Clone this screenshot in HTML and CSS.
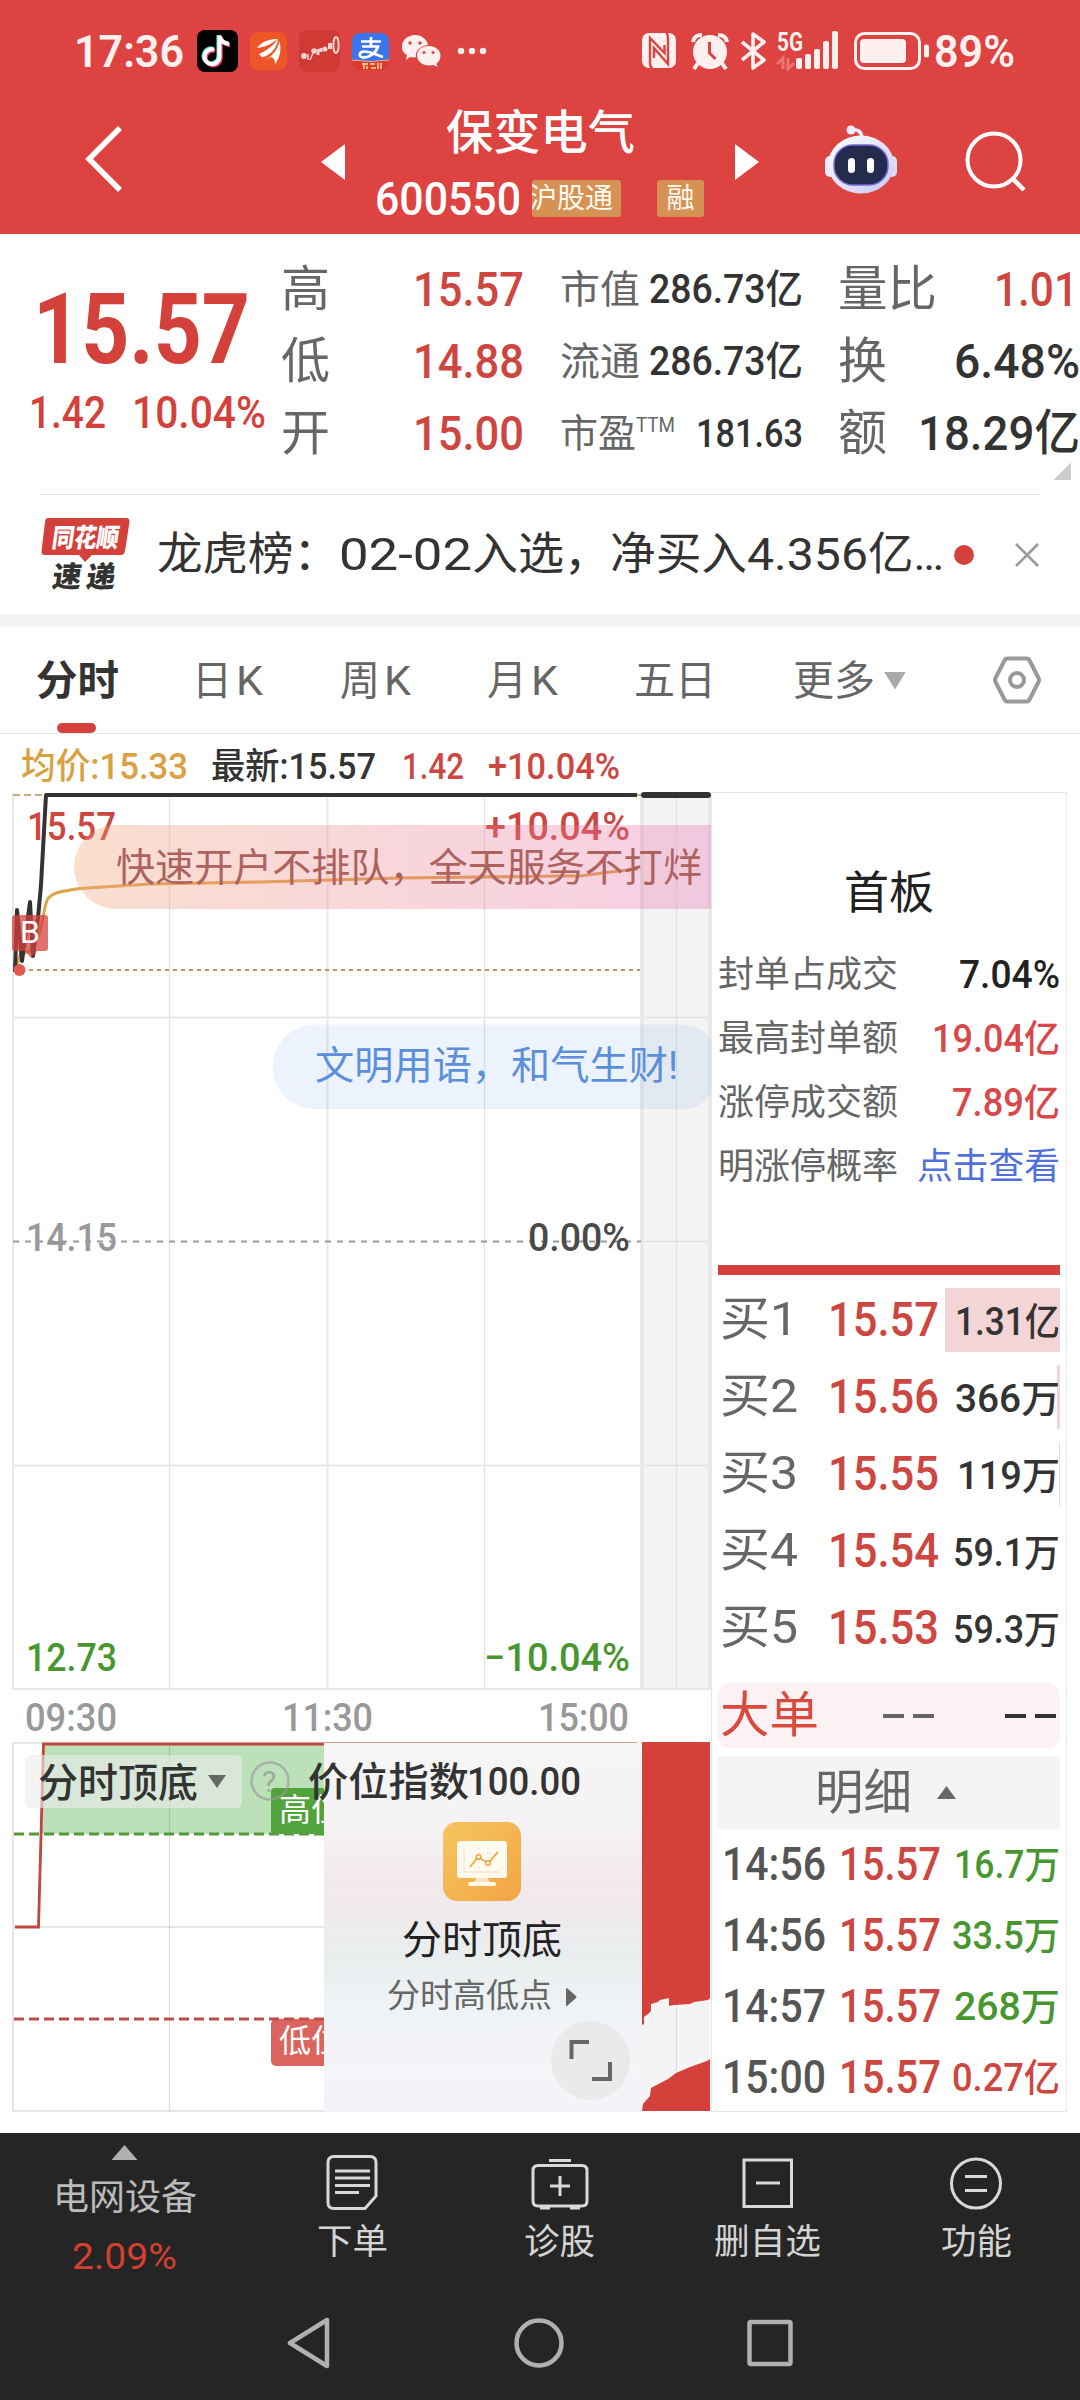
FILE: index.html
```html
<!DOCTYPE html>
<html lang="zh-CN">
<head>
<meta charset="utf-8">
<title>保变电气 600550</title>
<link rel="stylesheet" href="styles.css">
</head>
<body>
<header class="top">
  <div class="status">
    <div class="status-left">
      <span class="clock" data-w="110">17:36</span>
      <svg class="app-tiktok" width="41" height="42" viewBox="0 0 41 42"><rect width="41" height="42" rx="8"/><g fill="none" stroke-width="4"><path stroke="#5ff0ea" d="M17 19.500a7.500 7.500 0 1 0 5.500 8V6c1 5 5 7.500 9.500 8" transform="translate(-1 -.8)"/><path stroke="#f0436a" d="M17 19.500a7.500 7.500 0 1 0 5.500 8V6c1 5 5 7.500 9.500 8" transform="translate(1.200 1.200)"/><path stroke="#fff" d="M17 19.500a7.500 7.500 0 1 0 5.500 8V6c1 5 5 7.500 9.500 8"/></g></svg>
      <svg class="app-orange" width="37" height="38" viewBox="0 0 37 38"><rect width="37" height="38" rx="8" fill="#ee5527"/><g fill="#fff"><path d="M7 16C12 9 20 7 28 7C22 11 17 15 7 16z"/><path d="M9 22C16 19 23 14 28 7C27 17 20 23 12 25.500z"/><path d="M15 28C23 24 28 17 29.500 9C32 19 29 27 25 32C25 28 24 26 21 25z"/></g></svg>
      <svg class="app-stock" width="41" height="42" viewBox="0 0 41 42"><rect width="41" height="42" rx="8" fill="#d03a35"/><g fill="#fff" fill-opacity=".8" stroke="#f5cfca" stroke-width="1.500"><circle cx="5" cy="26" r="2.200"/><path d="M9 24v6M11 30l3-7" fill="none"/><circle cx="15" cy="21" r="2"/><path d="M19 19v6M22 18v4" fill="none" stroke-width="3"/><circle cx="26" cy="19" r="1.800"/><path d="M31 13v6" stroke-width="4"/><ellipse cx="37" cy="15" rx="2.600" ry="8" fill="none" stroke-width="2"/></g></svg>
      <svg class="app-alipay" width="37" height="37" viewBox="0 0 37 37"><rect width="37" height="37" rx="8" fill="#3c76ee"/><path d="M0 27Q18 30 37 27v2a8 8 0 0 1-8 8H8a8 8 0 0 1-8-8z" fill="#e33a27"/><path d="M0 27Q18 30 37 27" stroke="#f6b28a" fill="none"/><path d="M9 8.500h20M19 4v9M10 13.500h16C24 20 17 25 11 24.500C6 24 7 18.500 12 18.500C19 18.500 24 22 31 24" fill="none" stroke="#fff" stroke-width="2.700"/><path d="M10 31h6m-4-1v6m3-3v3m3-5h5m-4 4h5m2-5v6m3-6v6" stroke="#ffe3a0" stroke-width="1.500"/></svg>
      <svg class="app-wechat" width="40" height="34" viewBox="0 0 40 34"><g fill="#fff0f0"><path d="M13 1C20 1 25 5.500 26 11C18 12 13 17 14 23C12 24 10 23 8 23L4 26L5 21C1 19 0 16 0 12.500C0 6 6 1 13 1z"/><path d="M26.500 12C34 12 38.500 16.500 38.500 21.500C38.500 25 37 28 34.500 29.500L35.500 33L31.500 31C22 33 15 28 15 21.500C15 16 20 12 26.500 12z"/></g><g fill="#dd4340"><circle cx="8" cy="9" r="1.700"/><circle cx="18" cy="9" r="1.700"/><circle cx="22" cy="18.500" r="1.500"/><circle cx="31" cy="18.500" r="1.500"/></g></svg>
      <svg class="more-dots" width="30" height="8" viewBox="0 0 30 8" fill="#fff0f0"><circle cx="4" cy="4" r="3.200"/><circle cx="15" cy="4" r="3.200"/><circle cx="26" cy="4" r="3.200"/></svg>
    </div>
    <div class="status-right">
      <svg width="34" height="36" viewBox="0 0 34 36"><rect width="34" height="35" rx="7" fill="#fff0f0"/><path d="M10.500 35Q8 34 8 30V5L22.500 20V12M24 0Q26 1 26 5V31L12 15V25" fill="none" stroke="#dd4340" stroke-width="2.400"/></svg>
      <svg width="38" height="38" viewBox="0 0 38 38"><circle cx="19" cy="20" r="17" fill="#fff0f0"/><g fill="none" stroke="#fff0f0" stroke-width="4"><path d="M2 10Q3 3 11 3M36 10Q35 3 27 3M7 31l-4 6M31 31l4 6"/></g><path d="M18.500 10v11l6 6" fill="none" stroke="#dd4340" stroke-width="3"/></svg>
      <svg width="26" height="38" viewBox="0 0 26 38"><path d="M1 10L23 28L12 36V2L23 10L1 28" fill="none" stroke="#fff0f0" stroke-width="3.600" stroke-linejoin="round"/></svg>
      <svg width="64" height="40" viewBox="0 0 64 40"><text x="1" y="19.500" class="g5" textLength="26" lengthAdjust="spacingAndGlyphs">5G</text><path d="M1 33l6-6v11M12 27v11l6-6" fill="none" stroke="#ec7572" stroke-width="3"/><g fill="#fff0f0"><rect x="20" y="27" width="6" height="11" rx="2"/><rect x="29" y="23" width="6" height="15" rx="2"/><rect x="38" y="18" width="6" height="20" rx="2"/><rect x="47" y="10" width="6" height="28" rx="2"/><rect x="56" y="0" width="6" height="38" rx="2"/></g></svg>
      <svg width="76" height="38" viewBox="0 0 76 38"><rect x="1.500" y="1.500" width="64" height="35" rx="9" fill="none" stroke="#fff0f0" stroke-width="3"/><rect x="6" y="7" width="46" height="24" rx="4" fill="#fff0f0"/><rect x="70" y="12.500" width="5" height="13" rx="2" fill="#fff0f0"/></svg>
      <span class="clock" data-w="81">89%</span>
    </div>
  </div>
  <div class="titlebar">
    <svg class="back" width="40" height="70" viewBox="0 0 40 70"><path d="M36 4L5 35L36 66" fill="none" stroke="#fff" stroke-width="5.500"/></svg>
    <svg class="prev" width="24" height="36" viewBox="0 0 24 36"><path d="M24 0v36L0 18z" fill="#fff"/></svg>
    <div class="title">
      <div class="name" data-w="189">保变电气</div>
      <div class="code-row"><span class="code" data-w="146">600550</span><span class="tag tag-wide"><span data-w="84">沪股通</span></span><span class="tag tag-one">融</span></div>
    </div>
    <svg class="next" width="24" height="36" viewBox="0 0 24 36"><path d="M0 0v36L24 18z" fill="#fff"/></svg>
    <svg class="robot" width="74" height="70" viewBox="0 0 74 70">
      <defs><linearGradient id="rb" x1="0" y1="0" x2="1" y2="1"><stop offset="0" stop-color="#fff"/><stop offset="1" stop-color="#c9c8f0"/></linearGradient></defs>
      <path d="M27 5q10-2 11 8" fill="none" stroke="#f4eefb" stroke-width="3.500"/><circle cx="27" cy="5" r="4.500" fill="#f1ecff"/>
      <rect x="1" y="31" width="10" height="21" rx="5" fill="#eeeaff"/><rect x="63" y="31" width="10" height="21" rx="5" fill="#dedcf8"/>
      <ellipse cx="37" cy="39.500" rx="33" ry="29" fill="url(#rb)"/>
      <rect x="10" y="20" width="54" height="40" rx="19" fill="#232c4c" stroke="#7468d8" stroke-width="1.500"/>
      <rect x="24" y="33" width="7" height="15" rx="3.500" fill="#fff"/><rect x="43" y="33" width="7" height="15" rx="3.500" fill="#fff"/>
    </svg>
    <svg class="search" width="62" height="62" viewBox="0 0 62 62"><circle cx="29" cy="29" r="26.500" fill="none" stroke="#fff" stroke-width="4"/><path d="M48 48l11 11" stroke="#fff" stroke-width="4.500"/></svg>
  </div>
</header>

<section class="quote">
  <div class="price">
    <div class="price-main" data-w="217">15.57</div>
    <div class="price-sub"><span data-w="77">1.42</span><span data-w="134">10.04%</span></div>
  </div>
  <div class="stat">
    <div><span class="big-l">高</span><span class="big-v red" data-w="111">15.57</span></div>
    <div><span class="big-l">低</span><span class="big-v red" data-w="111">14.88</span></div>
    <div><span class="big-l">开</span><span class="big-v red" data-w="111">15.00</span></div>
  </div>
  <div class="stat mid">
    <div><span class="mid-l" data-w="80">市值</span><span class="mid-v" data-w="154">286.73亿</span></div>
    <div><span class="mid-l" data-w="80">流通</span><span class="mid-v" data-w="154">286.73亿</span></div>
    <div><span class="mid-l"><span data-w="76">市盈</span><sup data-w="39">TTM</sup></span><span class="small-v" data-w="107">181.63</span></div>
  </div>
  <div class="stat last">
    <div><span class="big-l" data-w="99">量比</span><span class="big-v red" data-w="84">1.01</span></div>
    <div><span class="big-l">换</span><span class="big-v" data-w="126">6.48%</span></div>
    <div><span class="big-l">额</span><span class="big-v" data-w="162">18.29亿</span></div>
  </div>
  <i class="corner"></i>
</section>

<section class="news">
  <svg width="90" height="74" viewBox="0 0 90 74"><path d="M7 0H85q4 0 3.500 4L84 33q-.5 4-4.500 4H51l-7 7l-6-7H4q-4 0-3.500-4L4 4q.5-4 3-4z" fill="#d4413b"/><g transform="skewX(-8)"><text x="14" y="29" class="logo-a" textLength="67" lengthAdjust="spacingAndGlyphs">同花顺</text><text x="20" y="69.500" class="logo-b" textLength="63">速递</text></g></svg>
  <span class="headline"><span data-w="182">龙虎榜：</span><span data-w="133">02-02</span><span data-w="138">入选，</span><span data-w="137">净买入</span><span data-w="121">4.356</span><span data-w="76">亿…</span></span>
  <i class="dot"></i>
  <svg class="close" width="26" height="26" viewBox="0 0 26 26"><path d="M2 2l22 22M24 2L2 24" stroke="#999" stroke-width="2.600"/></svg>
</section>

<nav class="tabs">
  <span class="on"><span data-w="83">分时</span></span>
  <span class="k"><span data-w="40">日</span><span data-w="27">K</span></span>
  <span class="k"><span data-w="40">周</span><span data-w="27">K</span></span>
  <span class="k"><span data-w="40">月</span><span data-w="27">K</span></span>
  <span><span data-w="82">五日</span></span>
  <span><span data-w="82">更多</span><i class="caret"></i></span>
  <svg width="50" height="48" viewBox="0 0 50 48"><path d="M15.500 2.500h19q2 0 3 2L46.500 22q1 2 0 4L37.500 43.500q-1 2-3 2h-19q-2 0-3-2L3.500 26q-1-2 0-4L12.500 4.500q1-2 3-2z" fill="none" stroke="#999" stroke-width="4"/><circle cx="25" cy="24" r="7" fill="none" stroke="#999" stroke-width="4"/></svg>
</nav>

<main class="board">
  <div class="charts">
    <div class="legend"><span class="gold" data-w="167">均价:15.33</span><span data-w="165">最新:15.57</span><span class="red" data-w="62">1.42</span><span class="red" data-w="132">+10.04%</span></div>
    <svg class="chart" width="712" height="952" viewBox="0 788 712 952">
      <defs><linearGradient id="bn"><stop offset="0" stop-color="#efa678" stop-opacity=".36"/><stop offset=".55" stop-color="#ea7d90" stop-opacity=".32"/><stop offset="1" stop-color="#e673b0" stop-opacity=".34"/></linearGradient></defs>
      <rect x="642" y="794" width="69" height="895" fill="#f4f4f4"/>
      <g stroke="#e3e3e3" stroke-width="1.300"><path d="M169.500 794V1689M484.500 794V1689M676.500 794V1689M13 1017.500H711M13 1465.500H711M642 1241.500H711"/></g>
      <g stroke="#e8e8e8" stroke-width="2" fill="none"><path d="M13 793V1690M327.500 794V1689M13 1689H711"/><path stroke-width="3.500" d="M642 793V1690M710 793V1690"/></g>
      <path d="M13 795H46M636 795H643" stroke="#c8ab7a" stroke-width="2" stroke-dasharray="7 4"/>
      <path d="M13 970H640" stroke="#bf9660" stroke-width="2" stroke-dasharray="4 4"/>
      <path d="M13 1241.500H641" stroke="#999" stroke-width="1.800" stroke-dasharray="6 6"/>
      <path d="M17 965L20 955L31 950L40 932L44 912L46 903C49 892 60 892 80 888.500L150 884L260 882L400 878L560 876L580 876L610 872L638 869" fill="none" stroke="#dfa44a" stroke-width="3"/>
      <path d="M15 972L17 910L22 961L30 902L33 956L38 918L41 885L46 795H637" fill="none" stroke="#333" stroke-width="4" stroke-linejoin="round"/>
      <path d="M644 795H708" stroke="#333" stroke-width="6" stroke-linecap="round"/>
      <g class="axis">
        <text x="27" y="840" class="f-red" textLength="89" lengthAdjust="spacingAndGlyphs">15.57</text>
        <text x="485" y="840" class="f-red" textLength="145" lengthAdjust="spacingAndGlyphs">+10.04%</text>
        <text x="26" y="1251" fill="#999" textLength="91" lengthAdjust="spacingAndGlyphs">14.15</text>
        <text x="528" y="1251" fill="#4a4a4a" textLength="102" lengthAdjust="spacingAndGlyphs">0.00%</text>
        <text x="26" y="1671" class="f-green" textLength="91" lengthAdjust="spacingAndGlyphs">12.73</text>
        <text x="484" y="1671" class="f-green" textLength="146" lengthAdjust="spacingAndGlyphs">−10.04%</text>
        <g fill="#999"><text x="25" y="1731" textLength="92" lengthAdjust="spacingAndGlyphs">09:30</text><text x="282" y="1731" textLength="91" lengthAdjust="spacingAndGlyphs">11:30</text><text x="538" y="1731" textLength="91" lengthAdjust="spacingAndGlyphs">15:00</text></g>
      </g>
      <path d="M711 825H116a42 42 0 0 0 0 84H711z" fill="url(#bn)"/>
      <text x="116" y="881" class="barrage" fill="#ad625e" textLength="586" lengthAdjust="spacingAndGlyphs">快速开户不排队，全天服务不打烊</text>
      <path d="M711 1039Q701 1024.500 680 1024.500H315a42 42 0 0 0 0 84.500H680Q701 1109 711 1094z" fill="#5f9be6" fill-opacity=".12"/>
      <text x="315" y="1079" class="barrage" fill="#5b8fdb" textLength="363" lengthAdjust="spacingAndGlyphs">文明用语，和气生财!</text>
      <rect x="12" y="915" width="36" height="36" rx="3" fill="#d4413b" fill-opacity=".74"/><path d="M25 951h12l-6 7z" fill="#d4413b" fill-opacity=".74"/>
      <text x="20" y="943" class="mark">B</text>
      <circle cx="19.500" cy="970" r="6" fill="#e05a54"/>
    </svg>
    <svg class="chart" width="712" height="380" viewBox="0 1740 712 380">
      <defs>
        <linearGradient id="cd" x2="0" y2="1"><stop offset="0" stop-color="#f6f6f6"/><stop offset=".2" stop-color="#f5f3f5"/><stop offset=".4" stop-color="#f2e9ec"/><stop offset=".58" stop-color="#e9edee"/><stop offset=".72" stop-color="#eff3f5"/><stop offset=".88" stop-color="#f5f4f8"/><stop offset="1" stop-color="#f5f3f7"/></linearGradient>
        <linearGradient id="ic" x2="1" y2="1"><stop offset="0" stop-color="#f5c55e"/><stop offset="1" stop-color="#f2a544"/></linearGradient>
      </defs>
      <path d="M43 1744H324V1834H40z" fill="#bce0b8"/>
      <g stroke="#e6e6e6" stroke-width="2" fill="none"><path d="M13 1742V2111H324M13 1743H44M13 1927H324"/></g><path d="M169.500 1744V2111" stroke="#000" stroke-opacity=".12" stroke-width="1.300"/>
      <path d="M14 1834H324" stroke="#55993a" stroke-width="3" stroke-dasharray="10 5"/>
      <rect x="271" y="1788" width="60" height="46" rx="4" fill="#51a33c"/><text x="279" y="1821" class="level">高位</text>
      <rect x="271" y="2019" width="60" height="47" rx="5" fill="#dc645e"/><text x="279" y="2052" class="level">低位</text>
      <path d="M14 2019H324" stroke="#bf4d47" stroke-width="3" stroke-dasharray="10 5"/>
      <path d="M15 1927H38.500L43.500 1744H324" fill="none" stroke="#c1463e" stroke-width="2.800"/>
      <rect x="324" y="1742" width="318" height="370" fill="url(#cd)"/><path d="M324 1742.500H637" stroke="#d69a94"/>
      <rect x="25" y="1755" width="217" height="53" rx="6" fill="#ebebeb" fill-opacity=".62"/>
      <text x="38" y="1797" class="pick" textLength="160" lengthAdjust="spacingAndGlyphs">分时顶底</text><path d="M208 1775h18l-9 13z" fill="#666"/>
      <circle cx="270" cy="1781" r="18.500" fill="none" stroke="#999" stroke-opacity=".65" stroke-width="2.500"/><text x="262" y="1792" class="help">?</text>
      <text x="308" y="1796" class="pick" textLength="161" lengthAdjust="spacingAndGlyphs">价位指数</text><text x="467" y="1795" class="pick-n" textLength="114" lengthAdjust="spacingAndGlyphs">100.00</text>
      <rect x="443" y="1822" width="78" height="79" rx="14" fill="url(#ic)"/>
      <rect x="457" y="1841" width="50" height="37" rx="3" fill="#fffaf0"/><path d="M476 1878h12l2 5h-16z" fill="#fbe3c2"/><rect x="468" y="1882" width="28" height="4" rx="2" fill="#fffaf0"/><path d="M464 1848V1872H500" fill="none" stroke="#f8dcb8"/><path d="M479 1847v24M488 1847v24" stroke="#f8dcb8" stroke-dasharray="2 3"/><path d="M470 1867L478 1857L488 1863L498 1852" fill="none" stroke="#eeae4d" stroke-width="2"/><circle cx="478.500" cy="1857" r="2.200" fill="#fff" stroke="#eda23c" stroke-width="1.500"/><circle cx="488" cy="1863" r="2.200" fill="#fff" stroke="#eda23c" stroke-width="1.500"/>
      <text x="402" y="1954" class="card-t" textLength="160" lengthAdjust="spacingAndGlyphs">分时顶底</text>
      <text x="387" y="2007" class="card-s" textLength="165" lengthAdjust="spacingAndGlyphs">分时高低点</text><path d="M566 1989v16q0 2 1.500 .5L576 1998q1-1 0-2L567.500 1988.500q-1.500-1-1.500 .5z" fill="#666"/>
      <circle cx="590.500" cy="2060.500" r="39.500" fill="#eaeaea"/><path d="M571.500 2059V2042H589M610 2062V2079H592" fill="none" stroke="#666" stroke-width="4"/>
      <rect x="642" y="1742" width="68" height="369" fill="#d4413a"/>
      <path d="M642 2025L644 2024V2017L648 2014L651 2011V2004L658 2002L660 2000L669 1998V2006L674 2005L690 2004L694 2002L708 2000L710 1998V2059L707 2061L690 2067L676 2073L668 2079L651 2088L650 2096L643 2104L642 2111z" fill="#f4f4f4"/><path d="M676.500 2005V2072" stroke="#ddd"/>
    </svg>
  </div>

  <aside class="panel">
    <h2><span data-w="90">首板</span></h2>
    <dl>
      <div><dt data-w="180">封单占成交</dt><dd data-w="101">7.04%</dd></div>
      <div><dt data-w="180">最高封单额</dt><dd class="crimson" data-w="128">19.04亿</dd></div>
      <div><dt data-w="180">涨停成交额</dt><dd class="crimson" data-w="108">7.89亿</dd></div>
      <div><dt data-w="180">明涨停概率</dt><dd class="link" data-w="143">点击查看</dd></div>
    </dl>
    <hr>
    <div class="bids">
      <div><span class="lv" data-w="78">买1</span><span class="px red" data-w="111">15.57</span><span class="vol v1"><span data-w="105">1.31亿</span></span></div>
      <div><span class="lv" data-w="78">买2</span><span class="px red" data-w="111">15.56</span><span class="vol v2"><span data-w="105">366万</span></span></div>
      <div><span class="lv" data-w="78">买3</span><span class="px red" data-w="111">15.55</span><span class="vol v3"><span data-w="103">119万</span></span></div>
      <div><span class="lv" data-w="78">买4</span><span class="px red" data-w="111">15.54</span><span class="vol"><span data-w="107">59.1万</span></span></div>
      <div><span class="lv" data-w="78">买5</span><span class="px red" data-w="111">15.53</span><span class="vol"><span data-w="107">59.3万</span></span></div>
    </div>
    <div class="large"><span data-w="99">大单</span><span class="dash"><i></i><i></i></span><span class="dash dark"><i></i><i></i></span></div>
    <div class="detail"><span data-w="97">明细</span><i></i></div>
    <div class="ticks">
      <div><span class="tm" data-w="104">14:56</span><span class="px red" data-w="102">15.57</span><span class="tv green" data-w="106">16.7万</span></div>
      <div><span class="tm" data-w="104">14:56</span><span class="px red" data-w="102">15.57</span><span class="tv green" data-w="108">33.5万</span></div>
      <div><span class="tm" data-w="104">14:57</span><span class="px red" data-w="102">15.57</span><span class="tv green" data-w="106">268万</span></div>
      <div><span class="tm" data-w="104">15:00</span><span class="px red" data-w="102">15.57</span><span class="tv red" data-w="108">0.27亿</span></div>
    </div>
  </aside>
</main>

<footer class="bottom">
  <div class="actions">
    <div class="sector"><i></i><span data-w="144">电网设备</span><b data-w="105">2.09%</b></div>
    <div class="act"><svg width="60" height="58" viewBox="0 0 60 58"><path d="M11 2.500H47q6 0 6 6V42L42 54.500H11q-6 0-6-6V8.500q0-6 6-6zM12 17H47M12 24H47M12 31.500H47M12 38.500H36"/></svg><span data-w="71">下单</span></div>
    <div class="act"><svg width="60" height="58" viewBox="0 0 60 58"><path d="M8 11.500H52q5 0 5 5V47q0 5-5 5H8q-5 0-5-5V16.500q0-5 5-5zM19 6.500H41M30 22V42M20 32H40M10 54H20M40 54H50"/></svg><span data-w="71">诊股</span></div>
    <div class="act"><svg width="60" height="58" viewBox="0 0 60 58"><path d="M6 6H53.500V52.500H6zM18 29H42"/></svg><span data-w="107">删自选</span></div>
    <div class="act"><svg width="60" height="58" viewBox="0 0 60 58"><circle cx="30" cy="29.500" r="24.500"/><path d="M19 22.500H41M19 36.500H41"/></svg><span data-w="71">功能</span></div>
  </div>
  <div class="keys">
    <svg width="44" height="52" viewBox="0 0 44 52"><path d="M40 3V49L3 26z"/></svg>
    <svg width="52" height="52" viewBox="0 0 52 52"><circle cx="26" cy="26" r="22.500"/></svg>
    <svg width="48" height="52" viewBox="0 0 48 52"><rect x="3.500" y="5" width="41" height="42" rx="1.500"/></svg>
  </div>
</footer>
<script src="fit.js"></script>
</body>
</html>
```
FILE: fit.js
```js
// Condenses each label to its column width, given in data-w.
document.querySelectorAll('[data-w]').forEach(function (el) {
  var want = Number(el.dataset.w);
  el.style.display = 'inline-block';
  el.style.width = 'max-content';
  var natural = el.getBoundingClientRect().width;
  el.style.transformOrigin = '0 50%';
  el.style.marginRight = (want - natural) + 'px';
  el.style.transform = 'scaleX(' + want / natural + ')';
});
```
FILE: styles.css
```css
* { box-sizing: border-box; }
body {
  margin: 0;
  width: 1080px;
  height: 2400px;
  overflow: hidden;
  background: #fff;
  color: #333;
  font-family: Roboto, "Noto Sans CJK SC", sans-serif;
}
svg { display: block; flex: none; }
i { display: block; font-style: normal; }
[data-w] { white-space: nowrap; flex: none; }
.red { color: #cd463f; }
.green { color: #48962f; }
.gold { color: #d9a142; }

/* header */
.top { height: 234px; background: #dd4340; color: #fff; }
.status { display: flex; justify-content: space-between; height: 103px; padding: 0 65px 0 74px; }
.status-left, .status-right { display: flex; align-items: center; height: 102px; }
.clock { font-size: 45px; font-weight: 600; color: #fff0f0; }
.app-tiktok { margin-left: 13px; }
.app-orange { margin-left: 12px; }
.app-stock { margin-left: 12px; }
.app-alipay { margin-left: 12px; }
.app-wechat { margin-left: 13px; }
.more-dots { margin-left: 15px; }
.status-right svg:nth-of-type(2) { margin-left: 15px; }
.status-right svg:nth-of-type(3) { margin-left: 12px; }
.status-right svg:nth-of-type(4) { margin-left: 9px; }
.status-right svg:nth-of-type(5) { margin-left: 14px; }
.status-right .clock { margin-left: 4px; }
.g5 { font: 700 25px Roboto, sans-serif; fill: #fff0f0; }
.titlebar { display: flex; align-items: flex-start; height: 131px; }
.back { margin: 21px 0 0 84px; }
.prev { margin: 41px 0 0 197px; }
.title { display: flex; flex-direction: column; width: 390px; padding-top: 1px; }
.name { align-self: flex-start; margin-left: 101px; font-size: 47px; font-weight: 500; line-height: 58px; }
.code-row { display: flex; align-items: center; height: 38px; margin: 17px 0 0 30px; }
.code { padding-top: 1px; font-size: 46.5px; font-weight: 500; line-height: 38px; }
.tag { display: flex; align-items: center; height: 37px; border-radius: 3px; background: #d69154; color: #fffaf0; font-size: 28px; line-height: 37px; overflow: hidden; }
.tag-wide { width: 89px; margin-left: 11px; justify-content: flex-end; padding-right: 8px; }
.tag-one { width: 47px; margin-left: 36px; justify-content: center; }
.next { margin: 41px 0 0; }
.robot { margin: 22px 0 0 65px; }
.search { margin: 28px 0 0 67px; }

/* quote */
.quote { position: relative; display: flex; height: 261px; }
.quote::after { content: ""; position: absolute; left: 40px; right: 40px; bottom: 0; height: 1px; background: #e6e6e6; }
.price { width: 281px; color: #d4413a; }
.price-main { margin: 45px 0 0 33px; font-size: 99px; font-weight: 700; line-height: 100px; }
.price-sub { display: flex; gap: 26px; margin: 12px 0 0 29px; font-size: 45px; font-weight: 500; line-height: 44px; }
.stat { width: 243px; padding-top: 20px; }
.stat > div { display: flex; justify-content: space-between; height: 72px; line-height: 72px; }
.stat.mid { width: 243px; margin-left: 36px; }
.stat.last { width: 242px; margin-left: 35px; }
.stat.last > div:first-child { padding-right: 2px; }
.big-l { font-size: 49px; color: #666; }
.big-v { font-size: 49px; font-weight: 500; }
.mid-l { display: flex; font-size: 39px; color: #666; }
.mid-v { font-size: 40px; font-weight: 500; }
.small-v { font-size: 38px; font-weight: 500; }
.mid-l sup { font-size: 20px; line-height: 54px; height: 72px; }
.corner { position: absolute; left: 1053px; top: 228px; width: 18px; height: 18px; background: linear-gradient(135deg, transparent 50%, #ccc 50%); }

/* news */
.news { display: flex; align-items: center; height: 132px; padding: 0 40px 0 41px; border-bottom: 13px solid #f4f4f4; }
.headline { display: flex; margin-left: 26px; font-size: 45px; line-height: 60px; }
.logo-a { font: 900 26px "Noto Sans CJK SC", sans-serif; fill: #fff; }
.logo-b { font: 900 29px "Noto Sans CJK SC", sans-serif; fill: #333; }
.dot { width: 20px; height: 20px; margin-left: 10px; border-radius: 50%; background: #d4413a; }
.close { margin-left: 40px; }

/* tabs */
.tabs { display: grid; grid-template-columns: 156px 148px 147px 147px 159px 198px 50px; grid-template-rows: 106px; height: 107px; padding-left: 36px; border-bottom: 1px solid #e6e6e6; color: #666; font-size: 41px; line-height: 60px; }
.tabs > span { position: relative; display: flex; align-items: center; padding-top: 1px; }
.tabs .k { gap: 4px; }
.tabs .on { color: #333; font-weight: 700; }
.tabs .on::after { content: ""; position: absolute; left: 21px; bottom: 0; width: 39px; height: 10px; border-radius: 5px; background: #d4413a; }
.tabs svg { align-self: center; margin-left: 1px; }
.caret { width: 22px; height: 18px; margin-left: 9px; background: #aaa; clip-path: polygon(0 0, 100% 0, 50% 100%); }

/* charts */
.board { display: grid; grid-template-columns: 711px 356px; height: 1399px; }
.legend { display: flex; height: 54px; padding-left: 21px; font-size: 36px; font-weight: 500; line-height: 67px; }
.legend span:nth-child(2) { margin-left: 23px; }
.legend span:nth-child(3) { margin-left: 26px; }
.legend span:nth-child(4) { margin-left: 24px; }
.axis { font-size: 39px; font-weight: 500; }
.f-red { fill: #cd463f; }
.f-green { fill: #48962f; }
.barrage { font-size: 39px; }
.mark { font-size: 32px; fill: #fff; }
.level { font-size: 32px; fill: #fff; }
.pick { font-size: 40px; font-weight: 500; fill: #333; }
.pick-n { font-size: 39px; font-weight: 500; fill: #333; }
.help { font-size: 30px; fill: #999; fill-opacity: .8; }
.card-t { font-size: 40px; fill: #222; }
.card-s { font-size: 33px; fill: #666; }

/* order panel */
.panel { height: 1320px; margin-top: 58px; padding: 0 6px; border: 1px solid #e8e8e8; }
.panel h2 { margin: 71px 0 0; font-size: 45px; font-weight: 400; line-height: 60px; text-align: center; color: #222; }
.panel dl { margin: 19px 0 0; }
.panel dl div { display: flex; justify-content: space-between; height: 64px; line-height: 64px; font-size: 36px; }
.panel dt { color: #666; }
.panel dd { margin: 0; font-size: 38px; font-weight: 500; color: #222; }
.panel dd.crimson { color: #d8484a; }
.panel dd.link { color: #5070dc; font-size: 36px; font-weight: 400; }
.panel hr { height: 10px; margin: 66px 0 5px; border: 0; background: #d4413a; }
.bids > div { display: flex; height: 77px; padding-top: 8px; line-height: 64px; }
.lv { margin-left: 2px; font-size: 47px; line-height: 62px; color: #666; }
.bids .px { margin-left: 30px; font-size: 49px; font-weight: 500; }
.vol { flex: 1; display: flex; justify-content: flex-end; height: 64px; margin-left: 6px; font-size: 38px; font-weight: 500; line-height: 69px; }
.v1 { background: #f3d5d5; }
.v2 { background: linear-gradient(#f0d8d8, #f0d8d8) right / 3px 100% no-repeat; }
.v3 { background: linear-gradient(#f0d8d8, #f0d8d8) right / 1px 100% no-repeat; }
.large { display: flex; align-items: center; height: 65px; margin-top: 18px; padding: 0 4px 0 2px; border-radius: 12px; background: #fdf2f3; color: #d94b3f; font-size: 49px; line-height: 65px; }
.dash { display: flex; gap: 9px; margin-left: 64px; color: #666; }
.dash i { width: 21px; height: 4px; background: currentColor; }
.dash.dark { margin-left: auto; color: #333; }
.detail { display: flex; align-items: center; height: 73px; margin-top: 8px; padding-left: 97px; background: #f4f4f4; color: #666; font-size: 48px; line-height: 76px; }
.detail i { width: 19px; height: 13px; margin-left: 25px; background: #666; clip-path: polygon(50% 0, 100% 100%, 0 100%); }
.ticks > div { display: flex; height: 71px; line-height: 70px; }
.tm { margin-left: 4px; font-size: 46px; font-weight: 500; color: #555; }
.ticks .px { margin-left: 13px; font-size: 46px; font-weight: 500; }
.ticks .tv { margin-left: auto; font-size: 38px; font-weight: 500; line-height: 72px; }

/* bottom */
.bottom { height: 267px; background: #252525; }
.actions { display: grid; grid-template-columns: 249px 207px 207px 209px 208px; height: 156px; color: #d4d4d4; font-size: 35px; }
.sector { display: flex; flex-direction: column; align-items: center; color: #bbb; font-size: 36px; }
.sector i { width: 26px; height: 15px; margin-top: 12px; background: #b0b0b0; clip-path: polygon(50% 0, 100% 100%, 0 100%); }
.sector span { margin-top: 16px; line-height: 44px; }
.sector b { margin-top: 15px; font-size: 37px; font-weight: 400; line-height: 44px; color: #d4402f; }
.act { display: flex; flex-direction: column; align-items: center; padding-top: 21px; }
.act svg { fill: none; stroke: #d8d8d8; stroke-width: 3; }
.act span { margin-top: 9px; line-height: 44px; }
.keys { display: flex; align-items: center; justify-content: space-between; margin: 28px 286px 0 287px; fill: none; stroke: #b0b0b0; stroke-width: 4.5; stroke-linejoin: round; }
```
